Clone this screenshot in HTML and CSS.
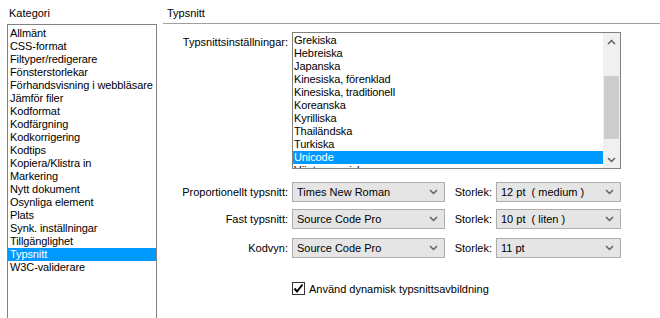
FILE: index.html
```html
<!DOCTYPE html>
<html lang="sv">
<head>
  <meta charset="UTF-8">
  <title>Inställningar - Typsnitt</title>
  <link rel="stylesheet" href="styles.css">
</head>
<body>
  <div class="dialog">
    <div class="category-column">
      <div class="caption">Kategori</div>
      <div class="listbox category-list">
        <div class="item">Allmänt</div>
        <div class="item">CSS-format</div>
        <div class="item">Filtyper/redigerare</div>
        <div class="item">Fönsterstorlekar</div>
        <div class="item">Förhandsvisning i webbläsare</div>
        <div class="item">Jämför filer</div>
        <div class="item">Kodformat</div>
        <div class="item">Kodfärgning</div>
        <div class="item">Kodkorrigering</div>
        <div class="item">Kodtips</div>
        <div class="item">Kopiera/Klistra in</div>
        <div class="item">Markering</div>
        <div class="item">Nytt dokument</div>
        <div class="item">Osynliga element</div>
        <div class="item">Plats</div>
        <div class="item">Synk. inställningar</div>
        <div class="item">Tillgänglighet</div>
        <div class="item selected">Typsnitt</div>
        <div class="item">W3C-validerare</div>
      </div>
    </div>

    <div class="panel">
      <div class="panel-title">Typsnitt</div>

      <div class="form">
        <div class="row encoding-row">
          <div class="label">Typsnittsinställningar:</div>
          <div class="listbox encoding-list">
            <div class="encoding-items">
              <div class="item">Grekiska</div>
              <div class="item">Hebreiska</div>
              <div class="item">Japanska</div>
              <div class="item">Kinesiska, förenklad</div>
              <div class="item">Kinesiska, traditionell</div>
              <div class="item">Koreanska</div>
              <div class="item">Kyrilliska</div>
              <div class="item">Thailändska</div>
              <div class="item">Turkiska</div>
              <div class="item selected">Unicode</div>
              <div class="item">Västeuropeisk</div>
            </div>
            <div class="scrollbar">
              <div class="arrow">
                <svg width="9" height="6" viewBox="0 0 9 6"><path d="M1 5 L4.5 1.5 L8 5" fill="none" stroke="#606060" stroke-width="1.5"/></svg>
              </div>
              <div class="track">
                <div class="thumb"></div>
              </div>
              <div class="arrow">
                <svg width="9" height="6" viewBox="0 0 9 6"><path d="M1 1 L4.5 4.5 L8 1" fill="none" stroke="#606060" stroke-width="1.5"/></svg>
              </div>
            </div>
          </div>
        </div>

        <div class="row font-row">
          <div class="label">Proportionellt typsnitt:</div>
          <div class="select font-select">Times New Roman<span class="chevron"><svg width="9" height="6" viewBox="0 0 9 6"><path d="M1 1 L4.5 4.5 L8 1" fill="none" stroke="#606060" stroke-width="1.5"/></svg></span></div>
          <div class="size-label">Storlek:</div>
          <div class="select size-select">12 pt &nbsp;( medium )<span class="chevron"><svg width="9" height="6" viewBox="0 0 9 6"><path d="M1 1 L4.5 4.5 L8 1" fill="none" stroke="#606060" stroke-width="1.5"/></svg></span></div>
        </div>

        <div class="row font-row second">
          <div class="label">Fast typsnitt:</div>
          <div class="select font-select">Source Code Pro<span class="chevron"><svg width="9" height="6" viewBox="0 0 9 6"><path d="M1 1 L4.5 4.5 L8 1" fill="none" stroke="#606060" stroke-width="1.5"/></svg></span></div>
          <div class="size-label">Storlek:</div>
          <div class="select size-select">10 pt &nbsp;( liten )<span class="chevron"><svg width="9" height="6" viewBox="0 0 9 6"><path d="M1 1 L4.5 4.5 L8 1" fill="none" stroke="#606060" stroke-width="1.5"/></svg></span></div>
        </div>

        <div class="row font-row third">
          <div class="label">Kodvyn:</div>
          <div class="select font-select">Source Code Pro<span class="chevron"><svg width="9" height="6" viewBox="0 0 9 6"><path d="M1 1 L4.5 4.5 L8 1" fill="none" stroke="#606060" stroke-width="1.5"/></svg></span></div>
          <div class="size-label">Storlek:</div>
          <div class="select size-select">11 pt<span class="chevron"><svg width="9" height="6" viewBox="0 0 9 6"><path d="M1 1 L4.5 4.5 L8 1" fill="none" stroke="#606060" stroke-width="1.5"/></svg></span></div>
        </div>

        <div class="row check-row">
          <div class="label"></div>
          <div class="checkbox">
            <svg width="11" height="11" viewBox="0 0 11 11"><path d="M1.5 5.5 L4 8.5 L9.5 1.5" fill="none" stroke="#000" stroke-width="2"/></svg>
          </div>
          <span class="check-text">Använd dynamisk typsnittsavbildning</span>
        </div>
      </div>
    </div>
  </div>
</body>
</html>
```

FILE: styles.css
```css
body {
  margin: 0;
  padding: 0;
  background-color: #ffffff;
  font-family: "Liberation Sans", Arial, sans-serif;
  font-size: 11px;
  color: #000;
}
.dialog {
  display: flex;
  height: 318px;
  overflow: hidden;
}
.category-column {
  width: 150px;
  padding-left: 7px;
  flex-shrink: 0;
}
.caption {
  height: 24px;
  line-height: 26px;
  padding-left: 2px;
}
.listbox {
  border: 1px solid #828282;
  background-color: #fff;
}
.category-list {
  height: 320px;
  padding: 2px 0 0 0;
  overflow: hidden;
}
.item {
  height: 13px;
  line-height: 13px;
  padding-left: 2px;
  white-space: nowrap;
  letter-spacing: -0.1px;
}
.item.selected {
  background-color: #0099ff;
  color: #fff;
}
.panel {
  flex: 1;
  margin-left: 6px;
}
.panel-title {
  height: 23px;
  line-height: 26px;
  padding-left: 4px;
  border-bottom: 1px solid #a0a0a0;
}
.form {
  padding-top: 8px;
}
.row {
  display: flex;
  align-items: center;
}
.label {
  width: 125px;
  text-align: right;
  padding-right: 4px;
  flex-shrink: 0;
}
.encoding-row {
  align-items: flex-start;
}
.encoding-row .label {
  padding-top: 4px;
}
.encoding-list {
  width: 327px;
  height: 135px;
  display: flex;
  overflow: hidden;
}
.encoding-items {
  flex: 1;
  padding-top: 1px;
}
.encoding-items .item {
  padding-left: 1px;
}
.scrollbar {
  width: 17px;
  background-color: #f0f0f0;
  display: flex;
  flex-direction: column;
}
.arrow {
  height: 17px;
  display: flex;
  align-items: center;
  justify-content: center;
}
.track {
  flex: 1;
  padding-top: 26px;
}
.thumb {
  margin: 0 1px;
  height: 63px;
  background-color: #cdcdcd;
}
.font-row {
  margin-top: 13px;
}
.font-row.second {
  margin-top: 7px;
}
.font-row.third {
  margin-top: 9px;
}
.select {
  position: relative;
  height: 18px;
  line-height: 18px;
  border: 1px solid #adadad;
  background-color: #e5e5e5;
  padding-left: 4px;
  box-sizing: content-box;
}
.font-select {
  width: 147px;
}
.size-select {
  width: 119px;
}
.chevron {
  position: absolute;
  right: 6px;
  top: 6px;
  line-height: 0;
}
.size-label {
  width: 47px;
  text-align: right;
  padding-right: 4px;
  flex-shrink: 0;
}
.check-row {
  margin-top: 24px;
}
.checkbox {
  width: 11px;
  height: 11px;
  border: 1px solid #333;
  background-color: #fff;
  margin-right: 4px;
  line-height: 0;
}
```
